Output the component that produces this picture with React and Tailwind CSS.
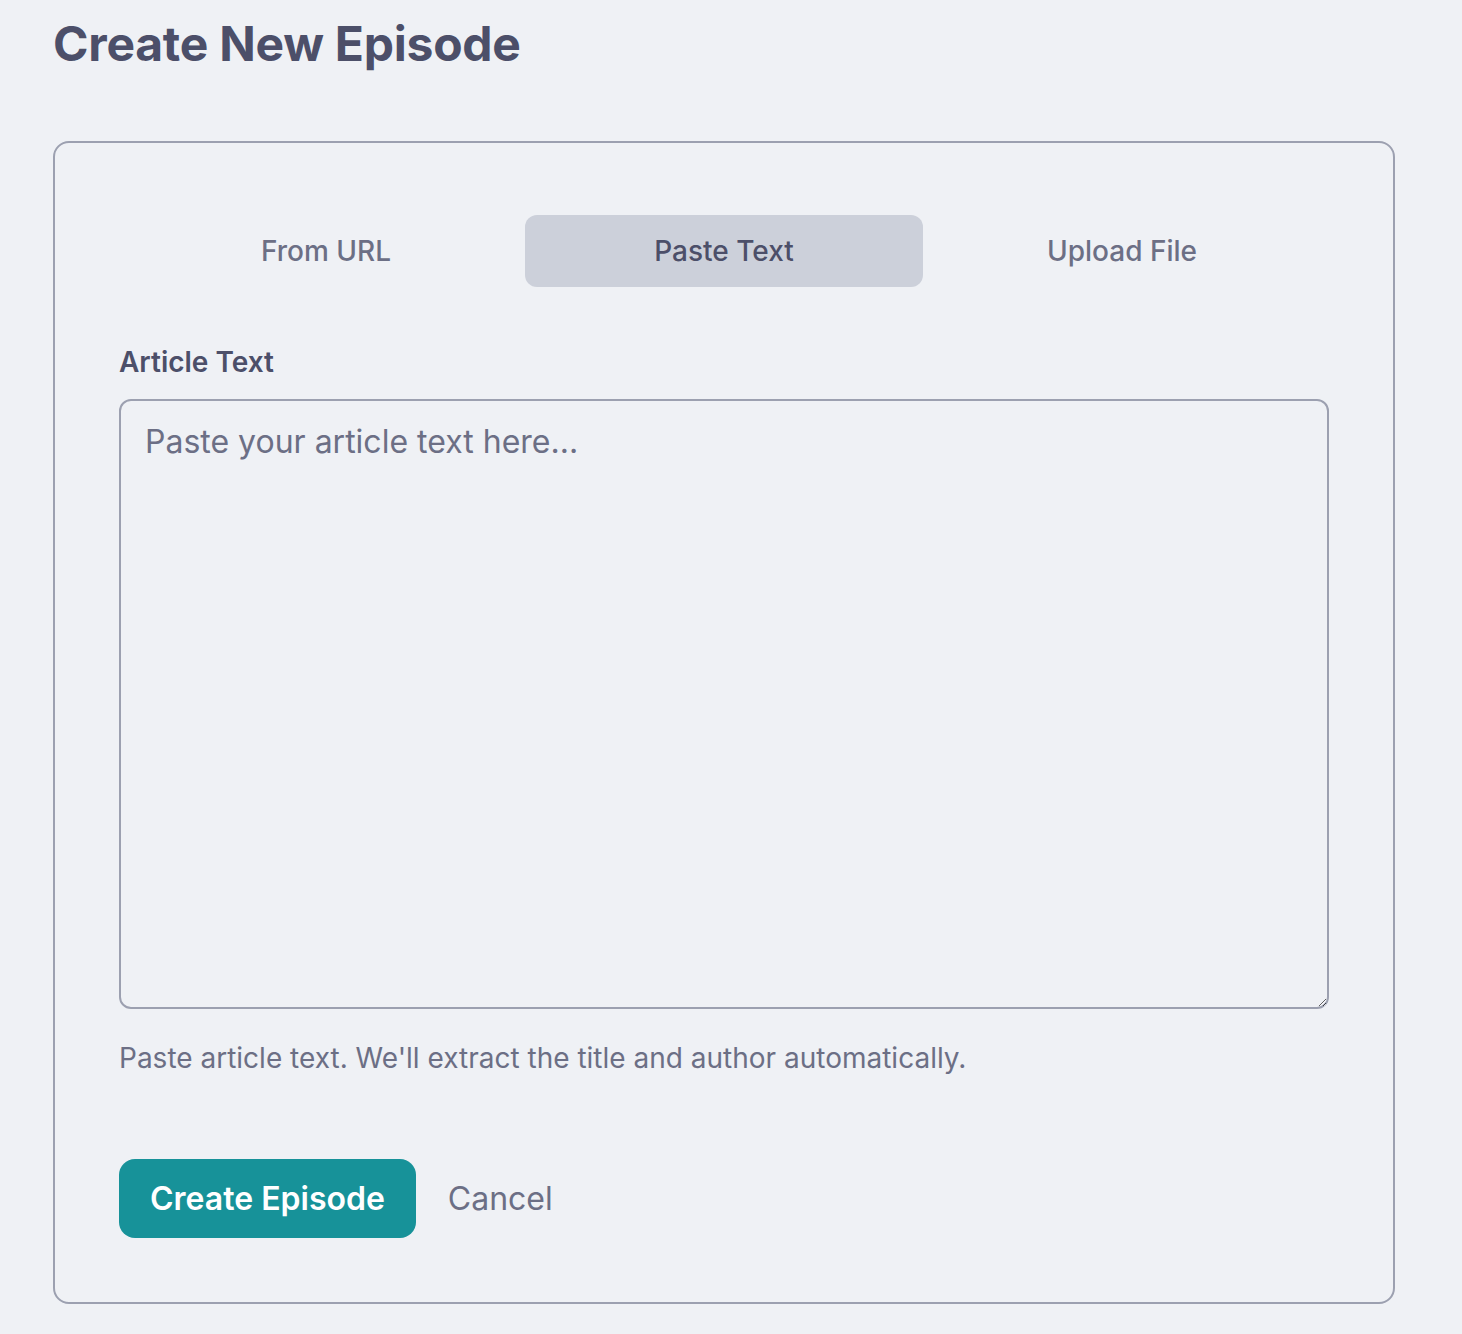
export default function App() {
  return (
    <div className="min-h-screen bg-[#eff1f5] px-[53px] pt-[14px] pb-[30px]" style={{ fontFamily: 'Inter, "Noto Sans", sans-serif' }}>
      <h1 className="text-[48px] leading-[60px] font-bold text-[#4c4f69] tracking-[-0.25px]">Create New Episode</h1>
      <div className="mt-[67px] w-[1342px] rounded-[16px] border-2 border-[#9ca0b0] p-[64px]">
        <div className="flex p-2">
          <button className="flex-1 h-[72px] rounded-[12px] text-[28px] font-medium text-[#6c6f85]">From URL</button>
          <button className="flex-1 h-[72px] rounded-[12px] bg-[#ccd0da] text-[28px] font-medium text-[#4c4f69]">Paste Text</button>
          <button className="flex-1 h-[72px] rounded-[12px] text-[28px] font-medium text-[#6c6f85]">Upload File</button>
        </div>
        <label className="mt-[46px] block text-[28px] leading-[42px] font-semibold text-[#4c4f69]">Article Text</label>
        <textarea
          className="mt-[16px] block w-full h-[610px] rounded-[12px] border-2 border-[#9ca0b0] bg-transparent px-[24px] pt-[17px] pb-[12px] text-[32px] leading-[48px] text-[#4c4f69] placeholder:text-[#6c6f85] outline-none"
          placeholder="Paste your article text here..."
        />
        <p className="mt-[28px] text-[28px] leading-[42px] text-[#6c6f85]">Paste article text. We'll extract the title and author automatically.</p>
        <div className="mt-[80px] flex items-center gap-[32px]">
          <button className="h-[79px] rounded-[16px] bg-[#179299] px-[31px] text-[32px] font-semibold text-white">Create Episode</button>
          <button className="text-[32px] text-[#6c6f85]">Cancel</button>
        </div>
      </div>
    </div>
  );
}
